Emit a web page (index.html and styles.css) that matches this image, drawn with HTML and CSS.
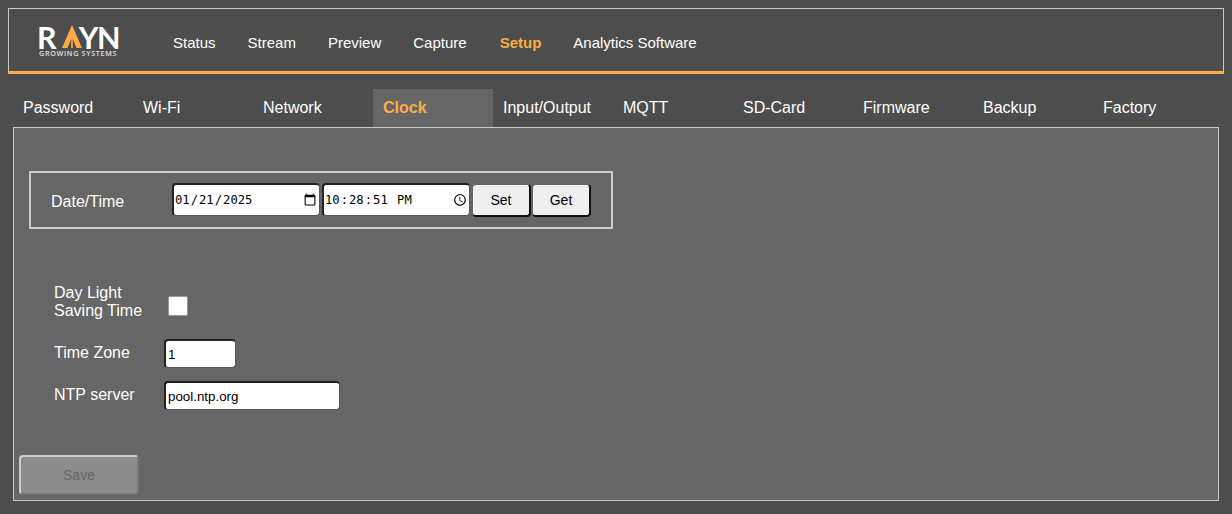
FILE: index.html
```html
<!DOCTYPE html>
<html lang="en">
<head>
<meta charset="utf-8">
<title>RAYN Setup</title>
<link rel="stylesheet" href="styles.css">
</head>
<body>
<header class="topbar">
  <div class="logo">
    <div class="logo-word">R<svg class="logo-a" viewBox="0 0 20 23" aria-hidden="true"><path d="M10 0 20 23H14.5L10.8 14V23H9.2V14L5.5 23H0Z"/></svg>YN</div>
    <div class="logo-sub">GROWING SYSTEMS</div>
  </div>
  <nav class="mainnav">
    <a>Status</a><a>Stream</a><a>Preview</a><a>Capture</a><a class="active">Setup</a><a>Analytics Software</a>
  </nav>
</header>
<div class="tabs">
  <a>Password</a><a>Wi-Fi</a><a>Network</a><a class="active">Clock</a><a>Input/Output</a><a>MQTT</a><a>SD-Card</a><a>Firmware</a><a>Backup</a><a>Factory</a>
</div>
<main class="panel">
  <div class="datetime">
    <span class="dt-label">Date/Time</span>
    <input class="field dt-input" type="date" value="2025-01-21">
    <input class="field dt-input" type="time" step="1" value="22:28:51">
    <button class="btn">Set</button>
    <button class="btn">Get</button>
  </div>
  <div class="settings">
    <label class="row-label first">Day Light<br>Saving Time</label>
    <input class="check" type="checkbox">
    <label class="row-label">Time Zone</label>
    <input class="field text tz" type="text" value="1">
    <label class="row-label">NTP server</label>
    <input class="field text ntp" type="text" value="pool.ntp.org">
  </div>
  <button class="save" disabled>Save</button>
</main>
</body>
</html>
```
FILE: styles.css
```css
* { box-sizing: border-box; }
html, body { height: 100%; }
body {
  margin: 0;
  padding: 8px 8px 0;
  background: #4d4d4d;
  color: #fff;
  font-family: "Liberation Sans", Arial, sans-serif;
  overflow: hidden;
}
.topbar {
  height: 66px;
  display: flex;
  align-items: center;
  border: 1px solid #c8c8c8;
  border-bottom: 3px solid #ffac47;
  padding-left: 30px;
}
.logo { width: 134px; height: 33px; margin-top: 3px; }
.logo-word {
  display: flex;
  align-items: flex-start;
  height: 24px;
  margin-left: -2px;
  font-family: Lato, sans-serif;
  font-size: 30.5px;
  font-weight: 700;
  line-height: 24px;
  letter-spacing: -1.5px;
  color: #fff;
}
.logo-a { width: 20px; height: 23px; margin: 0 -3px 0 6.5px; fill: #ffac47; flex: none; }
.logo-sub {
  margin-top: 1px;
  font-family: "Open Sans", sans-serif;
  font-size: 7.2px;
  font-weight: 600;
  line-height: 7px;
  letter-spacing: 0.68px;
  color: #e0e0e0;
  white-space: nowrap;
}
.mainnav { display: flex; gap: 32px; margin-top: 4px; font-size: 15px; }
.mainnav .active { margin-left: 1px; }
.mainnav .active, .tabs .active { color: #ffac47; font-weight: 700; }
.tabs {
  display: flex;
  margin: 15px 0 0 5px;
  height: 38px;
  font-size: 16px;
}
.tabs a {
  width: 120px;
  padding: 10px 0 0 10px;
  line-height: 18px;
}
.tabs .active { background: #666; }
.panel {
  width: 1206px;
  height: 374px;
  margin-left: 5px;
  padding: 43px 0 0;
  background: #666;
  border: 1px solid #c8c8c8;
}
.datetime {
  display: flex;
  align-items: flex-start;
  width: 584px;
  height: 58px;
  margin-left: 15px;
  padding: 10px 0 0 20px;
  border: 2px solid #ccc;
}
.dt-label { width: 121px; padding-top: 10px; font-size: 16px; line-height: 18px; }
.field {
  border-style: solid;
  border-width: 2px 1px 1px 2px;
  border-color: #222 #555 #555 #222;
  border-radius: 4px;
  background: #fff;
  color: #000;
}
.dt-input {
  width: 148px;
  height: 33px;
  margin-right: 2px;
  padding: 0;
  font-family: "DejaVu Sans Mono", monospace;
  font-size: 12.2px;
}
.dt-input::-webkit-calendar-picker-indicator {
  width: 14px;
  height: 14px;
  margin-right: 0;
  padding: 2px;
  box-sizing: content-box;
}
.btn {
  width: 59px;
  height: 33px;
  margin-top: 1px;
  padding: 0;
  background: #efefef;
  color: #000;
  border-style: solid;
  border-width: 1px 2px 2px 1px;
  border-color: #666 #111 #111 #666;
  border-radius: 4px;
  font: 14px "Liberation Sans", Arial, sans-serif;
}
.btn + .btn { margin-left: 1px; }
.settings {
  display: grid;
  grid-template-columns: 110px auto;
  justify-content: start;
  align-items: center;
  row-gap: 13px;
  margin: 54px 0 0 40px;
}
.row-label { margin-bottom: 2px; font-size: 16px; line-height: 18px; }
.row-label.first { margin-bottom: 6px; padding-top: 1px; }
.check {
  appearance: none;
  align-self: start;
  width: 20px;
  height: 20px;
  margin: 13px 0 0 4px;
  background: #fff;
  border: 1px solid #999;
  border-radius: 2px;
}
.text {
  height: 29px;
  padding: 1px 2px;
  font: 13.33px "Liberation Sans", Arial, sans-serif;
}
.tz { width: 72px; }
.ntp { width: 176px; }
.save {
  display: block;
  width: 120px;
  height: 40px;
  margin: 45px 0 0 5px;
  background: #8c8c8c;
  color: #666;
  border: 2px solid;
  border-color: #ccc #777 #777 #ccc;
  border-radius: 4px;
  font: 14px "Liberation Sans", Arial, sans-serif;
}
```
